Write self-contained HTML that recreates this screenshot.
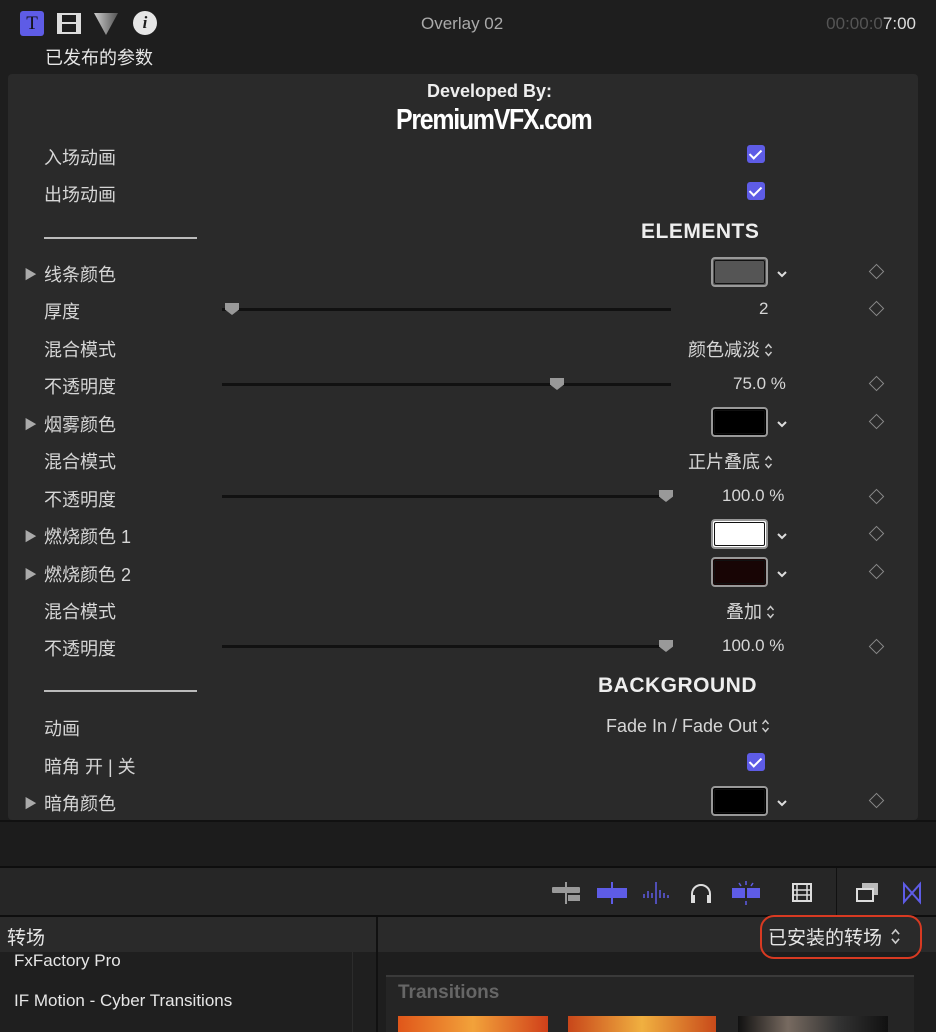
<!DOCTYPE html>
<html><head><meta charset="utf-8"><style>
*{margin:0;padding:0;box-sizing:border-box}
body{width:936px;height:1032px;background:#1e1e1e;position:relative;overflow:hidden;font-family:"Liberation Sans","Noto Sans CJK SC",sans-serif;color:#d6d6d6}
.a{position:absolute;white-space:nowrap}
.lbl{font-size:18px;left:44px}
.tri{left:24px;font-size:13px;color:#aaa}
.chk{width:18px;height:18px;background:#5e5ce6;border-radius:3px;left:747px}
.chk:after{content:"";position:absolute;left:5px;top:2px;width:5px;height:10px;border:solid #fff;border-width:0 2px 2px 0;transform:rotate(45deg)}
.dia{width:11px;height:11px;border:1.5px solid #888;transform:rotate(45deg);left:871px}
.sw{width:57px;height:30px;border:2px solid #999;border-radius:4px;left:711px}
.sw i{position:absolute;inset:1px;border:1px solid #111;border-radius:2px}
.dn{left:776px;width:12px;height:8px}
.ud{display:inline-block;width:9px;height:16px;vertical-align:-2px;margin-left:4px}
.track{left:222px;width:449px;height:3px;background:#111}
.knob{width:14px;height:12px;background:#999;clip-path:polygon(0 0,100% 0,100% 55%,50% 100%,0 55%);}
.val{font-size:17px}
.hr{left:44px;width:153px;height:2px;background:#bbb}
.hd{font-size:21px;font-weight:bold;color:#eee;letter-spacing:0.5px}
</style></head><body>
<svg width="0" height="0" style="position:absolute"><defs>
<symbol id="dn" viewBox="0 0 12 8"><path d="M2 2l4 4 4-4" stroke="#ddd" stroke-width="2" fill="none"/></symbol>
<symbol id="ud" viewBox="0 0 9 16"><path d="M1.5 6l3-3.5 3 3.5M1.5 10l3 3.5 3-3.5" stroke="#ccc" stroke-width="1.4" fill="none"/></symbol>
</defs></svg>
<div class="a" style="left:20px;top:11px;width:24px;height:25px;background:#5e5ce6;border-radius:3px;color:#111;font:19px 'Liberation Serif',serif;text-align:center;line-height:25px">T</div>
<div class="a" style="left:57px;top:13px;width:24px;height:21px;border:2px solid #ddd;border-left-width:5px;border-right-width:5px;"><div style="position:absolute;left:0;right:0;top:7px;height:2px;background:#ddd"></div></div>
<div class="a" style="left:94px;top:13px;width:24px;height:22px;background:linear-gradient(90deg,#ccc,#555);clip-path:polygon(0 0,100% 0,50% 100%)"></div>
<div class="a" style="left:133px;top:11px;width:24px;height:24px;border-radius:50%;background:#e6e6e6;color:#1e1e1e;font:bold italic 17px 'Liberation Serif',serif;text-align:center;line-height:24px">i</div>
<div class="a" style="left:421px;top:14px;font-size:17px;color:#aaa">Overlay 02</div>
<div class="a" style="right:20px;top:14px;font-size:17px;color:#555">00:00:0<span style="color:#ddd">7:00</span></div>
<div class="a" style="left:45px;top:44px;font-size:18px;color:#e6e6e6">已发布的参数</div>
<div class="a" style="left:8px;top:74px;width:910px;height:746px;background:#2a2a2a;border-radius:4px"></div>
<div class="a" style="left:427px;top:81px;font-size:18px;font-weight:bold;color:#eee">Developed By:</div>
<div class="a" style="left:396px;top:104px;font-size:29px;font-weight:bold;color:#fff;letter-spacing:-1.5px;transform:scaleX(0.86);transform-origin:left">PremiumVFX.com</div>

<div class="a lbl" style="top:144px">入场动画</div><div class="a chk" style="top:145px"></div>
<div class="a lbl" style="top:181px">出场动画</div><div class="a chk" style="top:182px"></div>
<div class="a hr" style="top:237px"></div>
<div class="a hd" style="left:641px;top:220px">ELEMENTS</div>

<div class="a tri" style="top:264px">▶</div><div class="a lbl" style="top:261px">线条颜色</div>
<div class="a sw" style="top:257px;background:#555"><i></i></div><svg class="a dn" style="top:270px"><use href="#dn"/></svg><div class="a dia" style="top:266px"></div>

<div class="a lbl" style="top:298px">厚度</div>
<div class="a track" style="top:308px"></div><div class="a knob" style="left:225px;top:303px"></div>
<div class="a val" style="left:759px;top:299px">2</div><div class="a dia" style="top:303px"></div>

<div class="a lbl" style="top:336px">混合模式</div><div class="a" style="left:688px;top:336px;font-size:18px">颜色减淡<svg class="ud"><use href="#ud"/></svg></div>

<div class="a lbl" style="top:373px">不透明度</div>
<div class="a track" style="top:383px"></div><div class="a knob" style="left:550px;top:378px"></div>
<div class="a val" style="left:733px;top:374px">75.0 %</div><div class="a dia" style="top:378px"></div>

<div class="a tri" style="top:414px">▶</div><div class="a lbl" style="top:411px">烟雾颜色</div>
<div class="a sw" style="top:407px;background:#000"><i></i></div><svg class="a dn" style="top:420px"><use href="#dn"/></svg><div class="a dia" style="top:416px"></div>

<div class="a lbl" style="top:448px">混合模式</div><div class="a" style="left:688px;top:448px;font-size:18px">正片叠底<svg class="ud"><use href="#ud"/></svg></div>

<div class="a lbl" style="top:486px">不透明度</div>
<div class="a track" style="top:495px"></div><div class="a knob" style="left:659px;top:490px"></div>
<div class="a val" style="left:722px;top:486px">100.0 %</div><div class="a dia" style="top:491px"></div>

<div class="a tri" style="top:526px">▶</div><div class="a lbl" style="top:523px">燃烧颜色 1</div>
<div class="a sw" style="top:519px;background:#fff"><i></i></div><svg class="a dn" style="top:532px"><use href="#dn"/></svg><div class="a dia" style="top:528px"></div>

<div class="a tri" style="top:564px">▶</div><div class="a lbl" style="top:561px">燃烧颜色 2</div>
<div class="a sw" style="top:557px;background:#180505"><i></i></div><svg class="a dn" style="top:570px"><use href="#dn"/></svg><div class="a dia" style="top:566px"></div>

<div class="a lbl" style="top:598px">混合模式</div><div class="a" style="left:726px;top:598px;font-size:18px">叠加<svg class="ud"><use href="#ud"/></svg></div>

<div class="a lbl" style="top:635px">不透明度</div>
<div class="a track" style="top:645px"></div><div class="a knob" style="left:659px;top:640px"></div>
<div class="a val" style="left:722px;top:636px">100.0 %</div><div class="a dia" style="top:641px"></div>

<div class="a hr" style="top:690px"></div>
<div class="a hd" style="left:598px;top:674px">BACKGROUND</div>

<div class="a lbl" style="top:715px">动画</div><div class="a" style="left:606px;top:716px;font-size:18px">Fade In / Fade Out<svg class="ud"><use href="#ud"/></svg></div>
<div class="a lbl" style="top:753px">暗角 开 | 关</div><div class="a chk" style="top:753px"></div>
<div class="a tri" style="top:793px">▶</div><div class="a lbl" style="top:790px">暗角颜色</div>
<div class="a sw" style="top:786px;background:#000"><i></i></div><svg class="a dn" style="top:799px"><use href="#dn"/></svg><div class="a dia" style="top:795px"></div>

<div class="a" style="left:0;top:820px;width:936px;height:2px;background:#111"></div>
<div class="a" style="left:0;top:822px;width:936px;height:45px;background:#1c1c1c"></div>
<div class="a" style="left:0;top:866px;width:936px;height:2px;background:#0e0e0e"></div>
<div class="a" style="left:0;top:868px;width:936px;height:47px;background:#262626"></div>
<div class="a" style="left:836px;top:868px;width:1px;height:47px;background:#111"></div>
<svg class="a" style="left:550px;top:878px" width="380" height="32">
<g fill="#999"><rect x="15" y="4" width="2" height="22"/><rect x="2" y="9" width="28" height="6" rx="1"/><rect x="18" y="17" width="12" height="6"/></g>
<g fill="#5e5ce6"><rect x="47" y="10" width="14" height="10"/><rect x="63" y="10" width="14" height="10"/><rect x="61" y="4" width="2" height="22"/></g>
<g stroke="#5e5ce6" stroke-width="1.5"><path d="M94 20v-4M98 20v-7M102 20v-5M106 26V4M110 20v-8M114 20v-5M118 20v-3"/></g>
<path d="M142 22v-6a9 9 0 0 1 18 0v6" stroke="#ddd" stroke-width="2" fill="none"/><rect x="141" y="17" width="4" height="8" fill="#ddd"/><rect x="157" y="17" width="4" height="8" fill="#ddd"/>
<g fill="#5e5ce6"><rect x="182" y="10" width="13" height="10"/><rect x="197" y="10" width="13" height="10"/><path d="M196 3v4M196 23v4M189 5l2 3M203 5l-2 3" stroke="#5e5ce6" stroke-width="1.5"/></g>
<rect x="243" y="6" width="18" height="17" fill="none" stroke="#ddd" stroke-width="2"/><path d="M247 6v17M257 6v17M243 12h18M243 17h18" stroke="#ddd" stroke-width="1.5"/>
<rect x="312" y="5" width="16" height="12" fill="#bbb"/><rect x="307" y="11" width="16" height="12" fill="#262626" stroke="#ddd" stroke-width="2"/>
<path d="M354 6v18l16-18v18z" fill="none" stroke="#5e5ce6" stroke-width="2"/>
</svg>
<div class="a" style="left:0;top:915px;width:936px;height:2px;background:#0e0e0e"></div>
<div class="a" style="left:0;top:917px;width:936px;height:35px;background:#2a2a2a"></div>
<div class="a" style="left:376px;top:917px;width:2px;height:115px;background:#111"></div>
<div class="a" style="left:7px;top:923px;font-size:19px;color:#e6e6e6">转场</div>
<div class="a" style="left:0;top:952px;width:376px;height:80px;background:#1f1f1f"></div>
<div class="a" style="left:352px;top:952px;width:1px;height:80px;background:#2c2c2c"></div>
<div class="a" style="left:14px;top:951px;font-size:17px;color:#e6e6e6">FxFactory Pro</div>
<div class="a" style="left:14px;top:991px;font-size:17px;color:#e6e6e6">IF Motion - Cyber Transitions</div>
<div class="a" style="left:378px;top:952px;width:558px;height:80px;background:#1e1e1e"></div>
<div class="a" style="left:386px;top:975px;width:528px;height:2px;background:#3a3a3a"></div>
<div class="a" style="left:386px;top:977px;width:528px;height:55px;background:#252525"></div>
<div class="a" style="left:398px;top:982px;font-size:19px;font-weight:bold;color:#666">Transitions</div>
<div class="a" style="left:398px;top:1016px;width:150px;height:16px;background:linear-gradient(90deg,#e0561a,#f2a23a,#d0401a)"></div>
<div class="a" style="left:568px;top:1016px;width:148px;height:16px;background:linear-gradient(90deg,#c8461a,#f0b040,#c84a1a)"></div>
<div class="a" style="left:738px;top:1016px;width:150px;height:16px;background:linear-gradient(90deg,#111,#776a60,#333,#111)"></div>
<div class="a" style="left:768px;top:923px;font-size:19px;color:#e6e6e6">已安装的转场<svg class="ud" style="width:11px;height:19px;margin-left:8px"><use href="#ud"/></svg></div>
<div class="a" style="left:760px;top:915px;width:162px;height:44px;border:2.5px solid #d83a22;border-radius:14px"></div>
</body></html>
